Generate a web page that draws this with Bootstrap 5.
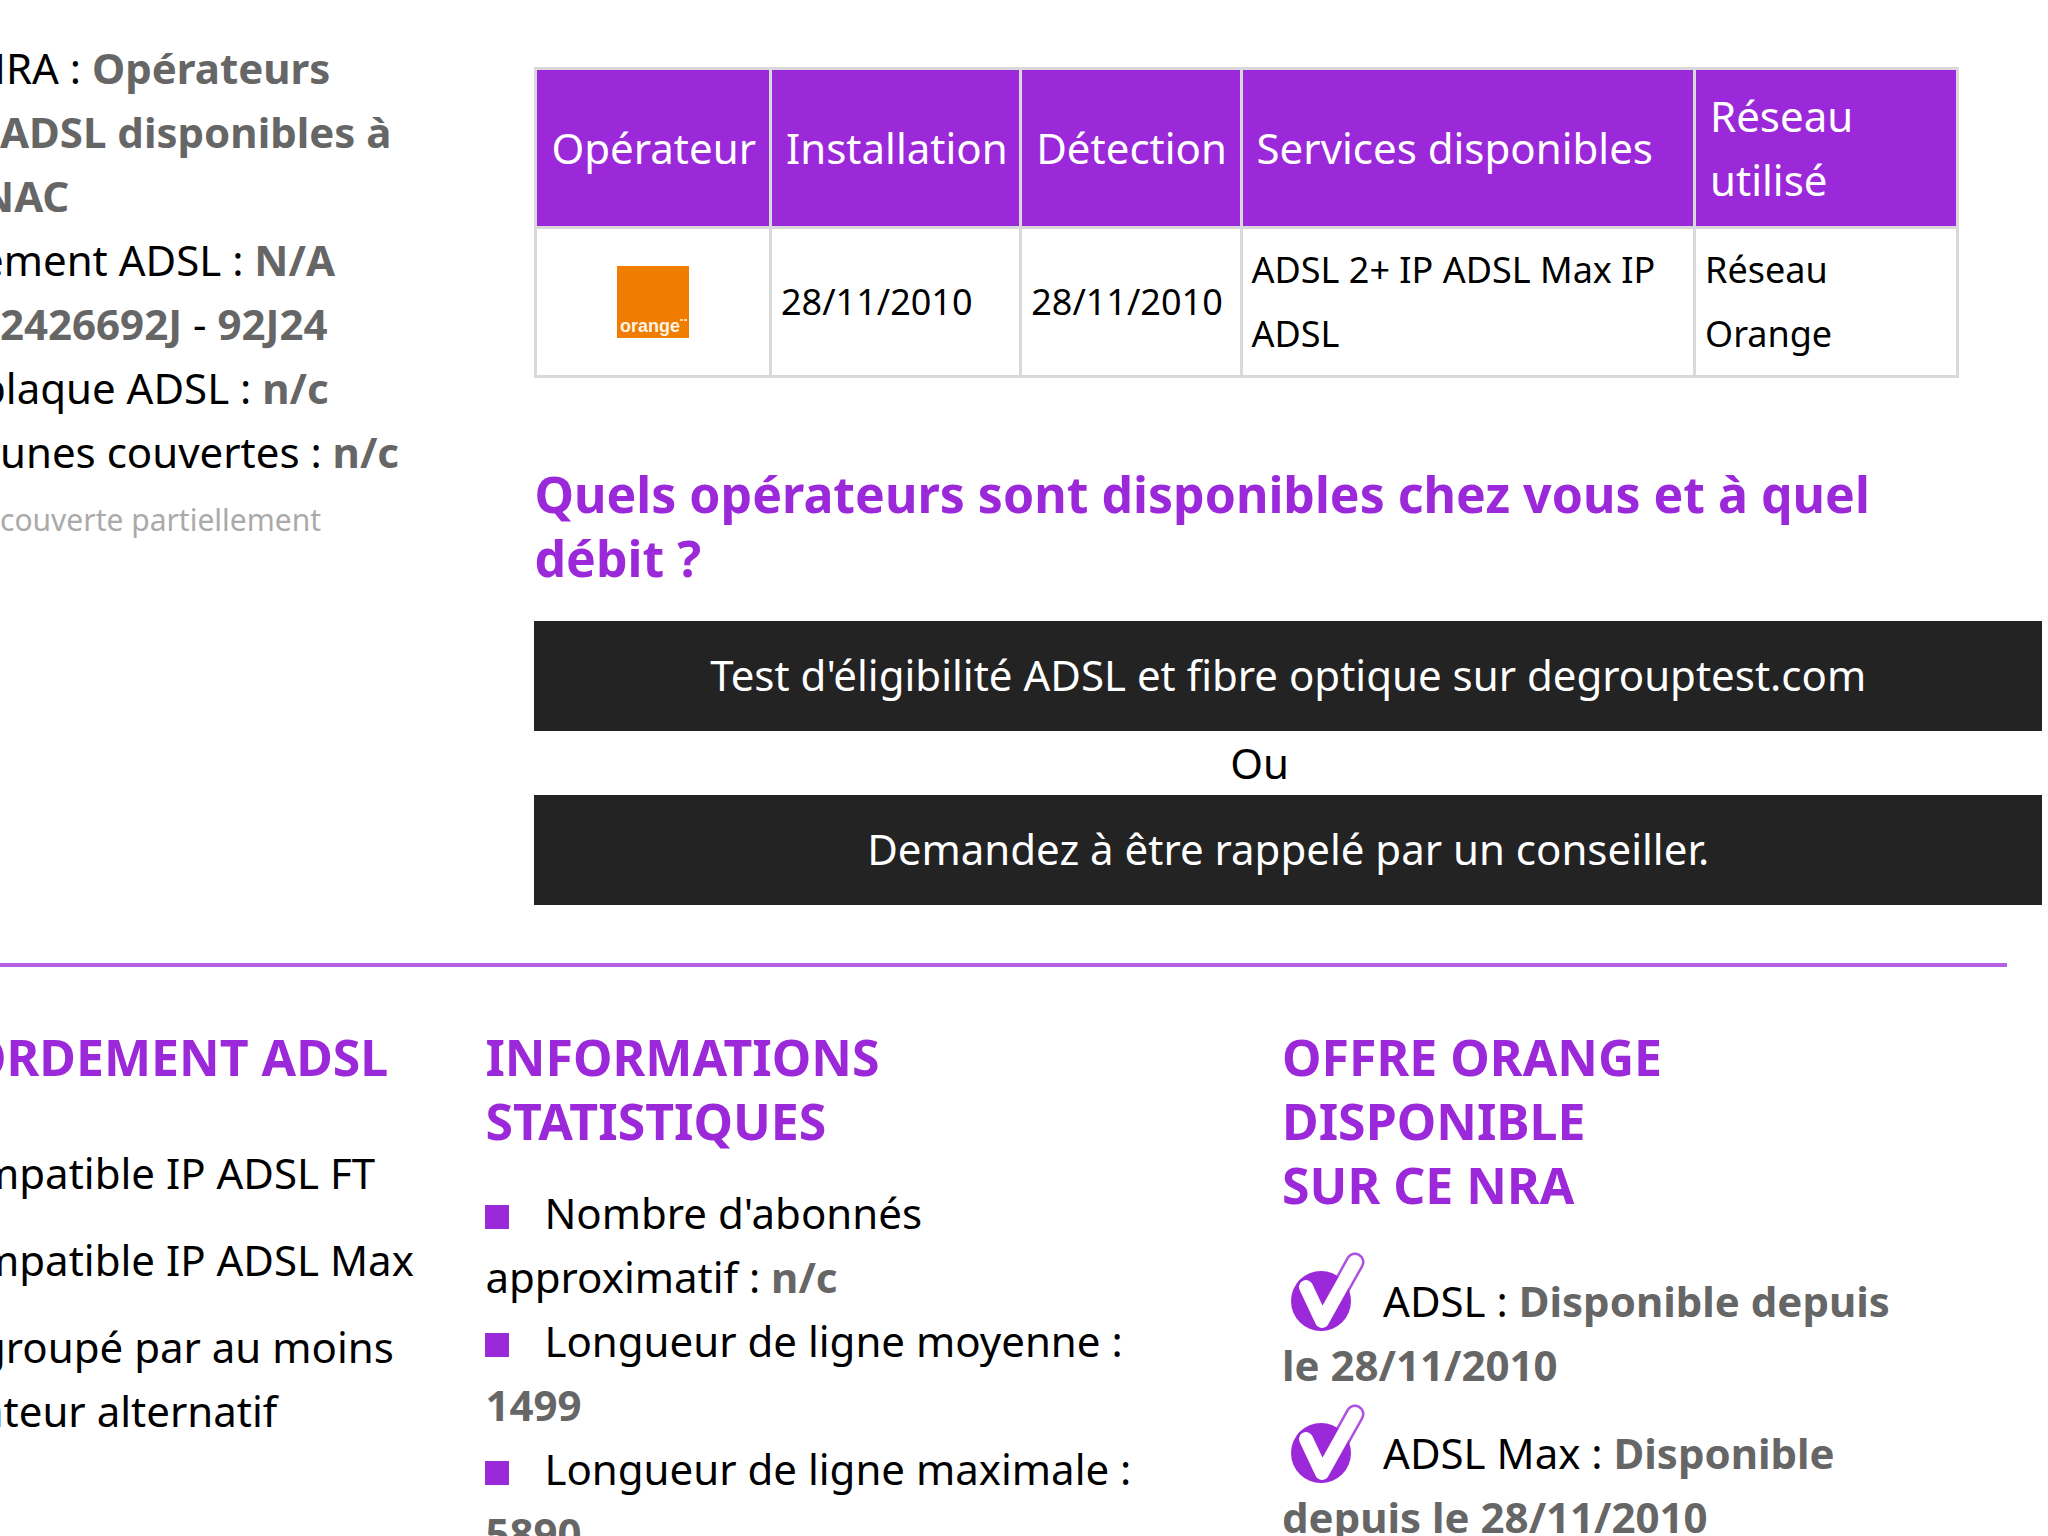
<!DOCTYPE html>
<html lang="fr">
<head>
<meta charset="utf-8">
<meta name="viewport" content="width=device-width, initial-scale=1">
<title>NRA : opérateurs ADSL disponibles</title>
<link href="https://cdn.jsdelivr.net/npm/bootstrap@5.3.0/dist/css/bootstrap.min.css" rel="stylesheet">
<style>
:root { --violet: #9c29d9; }
body { font-family: "Noto Sans", "Open Sans", sans-serif; font-size: 42px; line-height: 64px; color: #000; background: #fff; overflow: hidden; }
strong { color: #666; }
h2, h3 { font-size: 50px; line-height: 64px; font-weight: 700; color: var(--violet); }
.facts { flex: 0 0 26%; padding-top: 36px; }
.facts p, .links-list li { white-space: nowrap; margin-bottom: 0; }
.facts .cut, .links-list li { margin-left: -20px; }
.facts .cut-wide { margin-left: -26px; }
.facts .remark { font-size: 30px; color: #aaa; line-height: 72px; }
.offers { padding: 67px 6px 0 2px; }
.dslam { width: 94.5%; table-layout: fixed; border: 3px solid #d9d9d9; margin-bottom: 84px; }
.dslam th, .dslam td { border: 3px solid #d9d9d9; vertical-align: middle; }
.dslam th { background: var(--violet); color: #fff; font-weight: 400; padding: 14px 0 14px 14px; }
.dslam td { font-size: 36px; padding: 9px 0 9px 9px; }
.dslam td.brand { padding: 8px; text-align: center; }
.brand svg { width: 72px; height: 72px; }
.offers h2 { margin-bottom: 31px; }
.cta { background: #232323; color: #fff; border: 0; border-radius: 0; font-size: 42px; line-height: 64px; padding: 22px 0 24px; }
.cta:hover { background: #000; color: #fff; }
.or-line { width: 96.2%; }
.rule { width: 98%; height: 4px; background: #b75fe3; opacity: 1; border: 0; margin: 58px 0 0; }
.blocks { padding-top: 58px; }
.col-links { flex: 0 0 23.7%; }
.col-stats { flex: 0 0 38.9%; }
.col-offer { flex: 0 0 31%; }
.blocks h3 { margin-bottom: 28px; }
.blocks .col-links h3 { margin: 0 0 52px -33px; white-space: nowrap; }
.blocks .links-list li { margin-bottom: 23px; }
.stats-list { width: 660px; }
.stats-list li::before { content: ""; display: inline-block; width: 24px; height: 24px; margin-right: 35px; background: var(--violet); }
.tick { width: 74px; height: 80px; margin: 7px 18px 0 9px; vertical-align: -15px; }
</style>
</head>
<body>
<svg class="d-none" aria-hidden="true">
  <symbol id="tick" viewBox="0 0 74 80">
    <path d="M15 35L31 69L64 10" fill="none" stroke="#b050e0" stroke-width="19" stroke-linecap="round" stroke-linejoin="round"/>
    <circle cx="30" cy="49" r="30" fill="#9c29d9"/>
    <path d="M15 35L31 69L64 10" fill="none" stroke="#fff" stroke-width="14" stroke-linecap="round" stroke-linejoin="round"/>
  </symbol>
</svg>
<main>
  <section class="d-flex">
    <div class="facts">
      <p class="cut-wide">NRA : <strong>Opérateurs</strong></p>
      <p><strong>ADSL disponibles à</strong></p>
      <p class="cut"><strong>NAC</strong></p>
      <p class="cut">ement ADSL : <strong>N/A</strong></p>
      <p><strong>2426692J</strong> - <strong>92J24</strong></p>
      <p class="cut">plaque ADSL : <strong>n/c</strong></p>
      <p>unes couvertes : <strong>n/c</strong></p>
      <p class="remark">couverte partiellement</p>
    </div>
    <div class="offers flex-grow-1">
      <table class="dslam">
        <colgroup><col style="width:16.5%"><col style="width:17.6%"><col style="width:15.5%"><col style="width:31.9%"><col style="width:18.5%"></colgroup>
        <thead>
          <tr><th scope="col">Opérateur</th><th scope="col">Installation</th><th scope="col">Détection</th><th scope="col">Services disponibles</th><th scope="col">Réseau<br>utilisé</th></tr>
        </thead>
        <tbody>
          <tr>
            <td class="brand">
              <svg viewBox="0 0 72 72" role="img" aria-label="Orange"><rect width="72" height="72" fill="#f07d00"/><text x="3" y="66" font-family="Liberation Sans, sans-serif" font-weight="700" font-size="18" fill="#fff3e4">orange</text><path d="M63 54h3M67 54h3" stroke="#ffd9ae" stroke-width="2"/></svg>
            </td>
            <td>28/11/2010</td>
            <td>28/11/2010</td>
            <td>ADSL 2+ IP ADSL Max IP<br>ADSL</td>
            <td>Réseau<br>Orange</td>
          </tr>
        </tbody>
      </table>
      <h2>Quels opérateurs sont disponibles chez vous et à quel<br>débit ?</h2>
      <a class="btn cta d-block" href="#">Test d'éligibilité ADSL et fibre optique sur degrouptest.com</a>
      <div class="or-line text-center">Ou</div>
      <a class="btn cta d-block" href="#">Demandez à être rappelé par un conseiller.</a>
    </div>
  </section>
  <hr class="rule">
  <section class="blocks d-flex">
    <div class="col-links">
      <h3>ORDEMENT ADSL</h3>
      <ul class="links-list list-unstyled">
        <li>mpatible IP ADSL FT</li>
        <li>mpatible IP ADSL Max</li>
        <li>groupé par au moins<br>ateur alternatif</li>
      </ul>
    </div>
    <div class="col-stats">
      <h3>INFORMATIONS<br>STATISTIQUES</h3>
      <ul class="stats-list list-unstyled">
        <li>Nombre d'abonnés<br>approximatif : <strong>n/c</strong></li>
        <li>Longueur de ligne moyenne :<br><strong>1499</strong></li>
        <li>Longueur de ligne maximale :<br><strong>5890</strong></li>
      </ul>
    </div>
    <div class="col-offer">
      <h3>OFFRE ORANGE<br>DISPONIBLE<br>SUR CE NRA</h3>
      <ul class="list-unstyled">
        <li><svg class="tick" aria-hidden="true"><use href="#tick"/></svg>ADSL : <strong>Disponible depuis<br>le 28/11/2010</strong></li>
        <li><svg class="tick" aria-hidden="true"><use href="#tick"/></svg>ADSL Max : <strong>Disponible<br>depuis le 28/11/2010</strong></li>
      </ul>
    </div>
  </section>
</main>
<script src="https://cdn.jsdelivr.net/npm/bootstrap@5.3.0/dist/js/bootstrap.bundle.min.js"></script>
</body>
</html>
